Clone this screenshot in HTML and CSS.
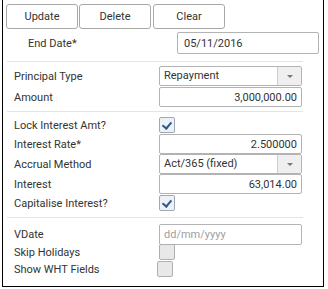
FILE: index.html
```html
<!DOCTYPE html>
<html lang="en">
<head>
  <meta charset="UTF-8" />
  <title>Repayment</title>
  <link rel="stylesheet" href="styles.css">
</head>
<body>

  <div class="frame">
    <!-- Toolbar -->
    <div class="toolbar">
      <button class="btn">Update</button>
      <button class="btn">Delete</button>
      <button class="btn">Clear</button>
    </div>

    <div class="row end-date">
      <label>End Date*</label>
      <input class="field" type="text" value="05/11/2016">
    </div>

    <hr class="sep">

    <div class="row first">
      <label>Principal Type</label>
      <div class="select"><span>Repayment</span><i class="arrow"></i></div>
    </div>
    <div class="row">
      <label>Amount</label>
      <input class="field num" type="text" value="3,000,000.00">
    </div>

    <hr class="sep">

    <div class="row chk">
      <label>Lock Interest Amt?</label>
      <span class="check on"></span>
    </div>
    <div class="row">
      <label>Interest Rate*</label>
      <input class="field num" type="text" value="2.500000">
    </div>
    <div class="row">
      <label>Accrual Method</label>
      <div class="select"><span>Act/365 (fixed)</span><i class="arrow"></i></div>
    </div>
    <div class="row">
      <label>Interest</label>
      <input class="field num" type="text" value="63,014.00">
    </div>
    <div class="row chk">
      <label>Capitalise Interest?</label>
      <span class="check on"></span>
    </div>

    <hr class="sep wide">

    <div class="row">
      <label>VDate</label>
      <input class="field date" type="text" placeholder="dd/mm/yyyy">
    </div>
    <div class="row skip">
      <label>Skip Holidays</label>
      <span class="check"></span>
    </div>
    <div class="row wht">
      <label>Show WHT Fields</label>
      <span class="check shift"></span>
    </div>
  </div>

</body>
</html>
```

FILE: styles.css
```css
* { box-sizing: border-box; margin: 0; padding: 0; }
body {
  background: #fff;
  font-family: Roboto, 'Liberation Sans', sans-serif;
  font-size: 11px;
  color: #333;
}

.frame {
  margin-left: 2px;
  width: 322px;
  height: 287px;
  border: 1px solid #000;
  border-top: none;
  padding: 4px 0 0 2px;
}

/* Toolbar */
.toolbar {
  display: flex;
  gap: 1px;
  margin-left: 1px;
}
.btn {
  width: 72px;
  height: 25px;
  background: #fff;
  border: 1px solid #a8a8a8;
  border-radius: 3px;
  font-family: inherit;
  font-size: 11px;
  color: #333;
}
.toolbar .btn:last-child { margin-left: 1px; }

/* Rows */
.row {
  display: flex;
  align-items: center;
  height: 20px;
  padding-left: 9px;
}
.row label {
  width: 145px;
  flex: none;
}
.row.first { margin-bottom: 1px; }
.row.chk { height: 18px; }
.row.skip { height: 16px; }
.row.wht { height: 18px; }

.end-date {
  height: 22px;
  margin: 3px 0 7px;
  padding-left: 23px;
}
.end-date label { width: 149px; }
.end-date .field { width: 142px; height: 22px; padding-left: 6px; }

.sep {
  border: none;
  border-top: 1px solid #e4e4e4;
  width: 296px;
  margin: 0 0 4px 2px;
}
.row + .sep { margin-top: 4px; }
.row + .sep.wide { margin-top: 5px; margin-bottom: 6px; }

.field {
  width: 143px;
  height: 20px;
  border: 1px solid #b3b3b3;
  border-radius: 2px;
  font-family: inherit;
  font-size: 11px;
  color: #333;
  padding: 0 4px;
  outline: none;
}
.field.num { text-align: right; }
.field.date { height: 21px; }
.field::placeholder { color: #a0a0a0; }

.select {
  display: flex;
  width: 143px;
  height: 20px;
  border: 1px solid #b3b3b3;
  border-radius: 2px;
}
.select span {
  flex: 1;
  line-height: 18px;
  padding-left: 4px;
}
.arrow {
  width: 24px;
  border-left: 1px solid #cfcfcf;
  background: #efefef;
  position: relative;
}
.arrow::after {
  content: '';
  position: absolute;
  left: 9px;
  top: 8px;
  border-left: 3px solid transparent;
  border-right: 3px solid transparent;
  border-top: 3px solid #777;
}

.check {
  width: 16px;
  height: 16px;
  border: 1px solid #b0b0b0;
  border-radius: 2px;
  background: #e8e8e8;
  position: relative;
}
.check.on {
  background: #eef1f5;
  border-color: #9fa9b5;
}
.check.on::after {
  content: '';
  position: absolute;
  left: 4px;
  top: 2px;
  width: 4px;
  height: 7px;
  border: solid #2f5a8c;
  border-width: 0 2px 2px 0;
  transform: rotate(40deg);
}
.check.shift { margin-left: -2px; }
```
